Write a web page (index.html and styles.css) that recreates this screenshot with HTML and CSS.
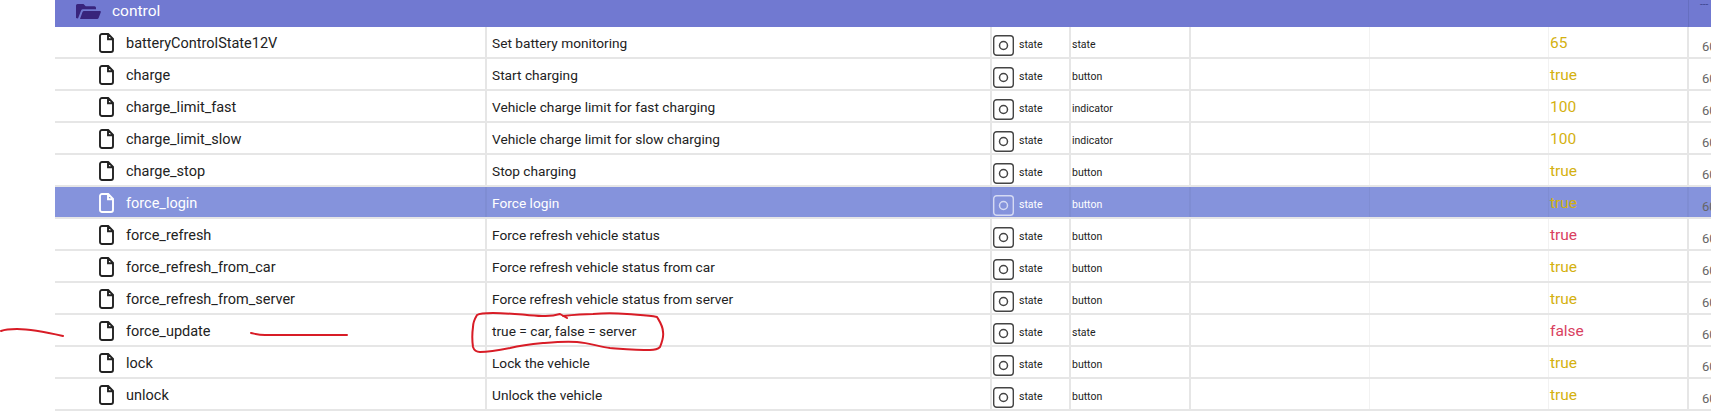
FILE: index.html
```html
<!DOCTYPE html>
<html lang="en">
<head>
  <meta charset="UTF-8">
  <title>Objects</title>
  <link rel="stylesheet" href="styles.css">
</head>
<body>
  <svg width="0" height="0" class="defs">
    <symbol id="file" viewBox="0 0 15 20">
      <path d="M3 1h6.2L14 5.8V17a2 2 0 0 1-2 2H3a2 2 0 0 1-2-2V3a2 2 0 0 1 2-2zM9 1v5.2h5" fill="none" stroke="currentColor" stroke-width="1.9"/>
    </symbol>
    <symbol id="state" viewBox="0 0 21 21">
      <rect x=".7" y=".7" width="19.6" height="19.6" rx="3" fill="none" stroke="currentColor" stroke-width="1.4"/>
      <circle cx="10.5" cy="10.5" r="4" fill="none" stroke="currentColor" stroke-width="1.5"/>
    </symbol>
  </svg>

  <div class="table">
    <div class="row folder">
      <svg class="folder-icon" viewBox="0 0 25 15"><path d="M0 14V1.5A1.5 1.5 0 0 1 1.5 0h6l2.2 2.2h8.8A1.5 1.5 0 0 1 20 3.7v1.5H7a2 2 0 0 0-1.9 1.3L2 14.6zM4 15l2.5-7a1.6 1.6 0 0 1 1.5-1.1h15.8a1 1 0 0 1 1 1.3l-2.2 5.7a1.6 1.6 0 0 1-1.5 1.1z"/></svg>
      <span class="folder-name">control</span>
      <span class="dashes">---</span>
    </div>

    <div class="row">
      <div class="cell name"><svg class="file-icon"><use href="#file"/></svg>batteryControlState12V</div>
      <div class="cell desc">Set battery monitoring</div>
      <div class="cell type"><svg class="state-icon"><use href="#state"/></svg>state</div>
      <div class="cell role">state</div>
      <div class="cell room"></div>
      <div class="cell func"></div>
      <div class="cell value gold">65</div>
      <div class="cell last">60</div>
    </div>
    <div class="row">
      <div class="cell name"><svg class="file-icon"><use href="#file"/></svg>charge</div>
      <div class="cell desc">Start charging</div>
      <div class="cell type"><svg class="state-icon"><use href="#state"/></svg>state</div>
      <div class="cell role">button</div>
      <div class="cell room"></div>
      <div class="cell func"></div>
      <div class="cell value gold">true</div>
      <div class="cell last">60</div>
    </div>
    <div class="row">
      <div class="cell name"><svg class="file-icon"><use href="#file"/></svg>charge_limit_fast</div>
      <div class="cell desc">Vehicle charge limit for fast charging</div>
      <div class="cell type"><svg class="state-icon"><use href="#state"/></svg>state</div>
      <div class="cell role">indicator</div>
      <div class="cell room"></div>
      <div class="cell func"></div>
      <div class="cell value gold">100</div>
      <div class="cell last">60</div>
    </div>
    <div class="row">
      <div class="cell name"><svg class="file-icon"><use href="#file"/></svg>charge_limit_slow</div>
      <div class="cell desc">Vehicle charge limit for slow charging</div>
      <div class="cell type"><svg class="state-icon"><use href="#state"/></svg>state</div>
      <div class="cell role">indicator</div>
      <div class="cell room"></div>
      <div class="cell func"></div>
      <div class="cell value gold">100</div>
      <div class="cell last">60</div>
    </div>
    <div class="row">
      <div class="cell name"><svg class="file-icon"><use href="#file"/></svg>charge_stop</div>
      <div class="cell desc">Stop charging</div>
      <div class="cell type"><svg class="state-icon"><use href="#state"/></svg>state</div>
      <div class="cell role">button</div>
      <div class="cell room"></div>
      <div class="cell func"></div>
      <div class="cell value gold">true</div>
      <div class="cell last">60</div>
    </div>
    <div class="row selected">
      <div class="cell name"><svg class="file-icon"><use href="#file"/></svg>force_login</div>
      <div class="cell desc">Force login</div>
      <div class="cell type"><svg class="state-icon"><use href="#state"/></svg>state</div>
      <div class="cell role">button</div>
      <div class="cell room"></div>
      <div class="cell func"></div>
      <div class="cell value gold">true</div>
      <div class="cell last">60</div>
    </div>
    <div class="row">
      <div class="cell name"><svg class="file-icon"><use href="#file"/></svg>force_refresh</div>
      <div class="cell desc">Force refresh vehicle status</div>
      <div class="cell type"><svg class="state-icon"><use href="#state"/></svg>state</div>
      <div class="cell role">button</div>
      <div class="cell room"></div>
      <div class="cell func"></div>
      <div class="cell value red">true</div>
      <div class="cell last">60</div>
    </div>
    <div class="row">
      <div class="cell name"><svg class="file-icon"><use href="#file"/></svg>force_refresh_from_car</div>
      <div class="cell desc">Force refresh vehicle status from car</div>
      <div class="cell type"><svg class="state-icon"><use href="#state"/></svg>state</div>
      <div class="cell role">button</div>
      <div class="cell room"></div>
      <div class="cell func"></div>
      <div class="cell value gold">true</div>
      <div class="cell last">60</div>
    </div>
    <div class="row">
      <div class="cell name"><svg class="file-icon"><use href="#file"/></svg>force_refresh_from_server</div>
      <div class="cell desc">Force refresh vehicle status from server</div>
      <div class="cell type"><svg class="state-icon"><use href="#state"/></svg>state</div>
      <div class="cell role">button</div>
      <div class="cell room"></div>
      <div class="cell func"></div>
      <div class="cell value gold">true</div>
      <div class="cell last">60</div>
    </div>
    <div class="row">
      <div class="cell name"><svg class="file-icon"><use href="#file"/></svg>force_update</div>
      <div class="cell desc">true = car, false = server</div>
      <div class="cell type"><svg class="state-icon"><use href="#state"/></svg>state</div>
      <div class="cell role">state</div>
      <div class="cell room"></div>
      <div class="cell func"></div>
      <div class="cell value red">false</div>
      <div class="cell last">60</div>
    </div>
    <div class="row">
      <div class="cell name"><svg class="file-icon"><use href="#file"/></svg>lock</div>
      <div class="cell desc">Lock the vehicle</div>
      <div class="cell type"><svg class="state-icon"><use href="#state"/></svg>state</div>
      <div class="cell role">button</div>
      <div class="cell room"></div>
      <div class="cell func"></div>
      <div class="cell value gold">true</div>
      <div class="cell last">60</div>
    </div>
    <div class="row">
      <div class="cell name"><svg class="file-icon"><use href="#file"/></svg>unlock</div>
      <div class="cell desc">Unlock the vehicle</div>
      <div class="cell type"><svg class="state-icon"><use href="#state"/></svg>state</div>
      <div class="cell role">button</div>
      <div class="cell room"></div>
      <div class="cell func"></div>
      <div class="cell value gold">true</div>
      <div class="cell last">60</div>
    </div>
  </div>

  <!-- red marker scribbles on top of the screenshot -->
  <svg class="marks" viewBox="0 0 1711 416">
    <path d="M1 331C6 329 12 329 17 329C30 329 50 333 63 336"/>
    <path d="M251 333C256 334 259 335 265 335L347 335"/>
    <path d="M567 318L560 314C550 317 540 316 527 315C515 314 505 313 493 313C487 313 480 313 477 315C474 320 473 324 473 327C472 334 472 340 473 347C474 350 476 352 480 352C490 352 500 350 510 348C522 345 532 344 543 343C555 342 566 341 577 342C590 343 600 347 610 348C625 349 638 350 650 350C655 350 658 349 660 347C662 342 664 337 663 332C663 326 660 322 657 317C648 315 638 315 627 314C615 313 604 313 593 314C583 314 572 315 563 316"/>
  </svg>
</body>
</html>
```

FILE: styles.css
```css
html, body {
  margin: 0;
  height: 100%;
  overflow: hidden;
  background: #fff;
}

body {
  position: relative;
  font-family: Roboto, "Open Sans", sans-serif;
  color: #222;
}

.defs {
  display: block;
  height: 0;
}

.table {
  margin-left: 55px;
  width: 1656px;
  overflow: hidden;
}

.row {
  display: flex;
  height: 30px;
  border-bottom: 2px solid #e6e6e6;
}

.row.folder {
  box-sizing: border-box;
  height: 27px;
  padding-bottom: 5px;
  border-bottom: 0;
  background: #7179d1;
  align-items: center;
  color: #fff;
  position: relative;
}

.row.folder::after {
  content: "";
  position: absolute;
  left: 1633px;
  top: 0;
  bottom: 0;
  width: 1px;
  background: #666fc0;
}

.folder-icon {
  width: 25px;
  height: 15px;
  margin-left: 21px;
  fill: #38247c;
}

.folder-name {
  margin-left: 11px;
  font-size: 15.5px;
}

.dashes {
  position: absolute;
  left: 1645px;
  top: -1px;
  font-size: 10px;
  color: #3f4690;
}

.row.selected {
  background: #8593dc;
  color: #fff;
}

.cell {
  display: flex;
  align-items: center;
  flex: none;
  box-sizing: border-box;
  padding-top: 2px;
  border-right: 2px solid #e6e6e6;
  white-space: nowrap;
  overflow: hidden;
}

.selected .cell {
  border-right-color: #7f8dd3;
}

.name {
  width: 432px;
  padding-left: 44px;
  font-size: 14.5px;
}

.file-icon {
  width: 15px;
  height: 20px;
  margin-right: 12px;
  color: #222;
  flex: none;
}

.selected .file-icon {
  color: #fff;
}

.desc {
  width: 505px;
  font-size: 13.7px;
  padding-left: 5px;
}

.cell.type {
  width: 79px;
  padding-top: 4px;
  padding-left: 1px;
  font-size: 10.5px;
}

.state-icon {
  width: 21px;
  height: 21px;
  margin: 2px 5px 0 0;
  color: #444;
  flex: none;
}

.selected .state-icon {
  color: #d5daf3;
}

.cell.role {
  width: 120px;
  padding-top: 4px;
  padding-left: 1px;
  font-size: 10.5px;
}

.room,
.func {
  width: 179px;
  border-right-width: 1px;
  border-right-color: #f2f2f2;
}

.value {
  width: 140px;
  font-size: 15.5px;
  padding-left: 1px;
}

.gold {
  color: #d4b10f;
}

.red {
  color: #d9415f;
}

.cell.last {
  width: 40px;
  border-right: 0;
  padding: 8px 0 0 13px;
  font-size: 13px;
  color: #666;
}

.marks {
  position: absolute;
  left: 0;
  top: 0;
  width: 1711px;
  height: 416px;
  fill: none;
  stroke: #d81c26;
  stroke-width: 2;
  stroke-linecap: round;
  stroke-linejoin: round;
}
```
